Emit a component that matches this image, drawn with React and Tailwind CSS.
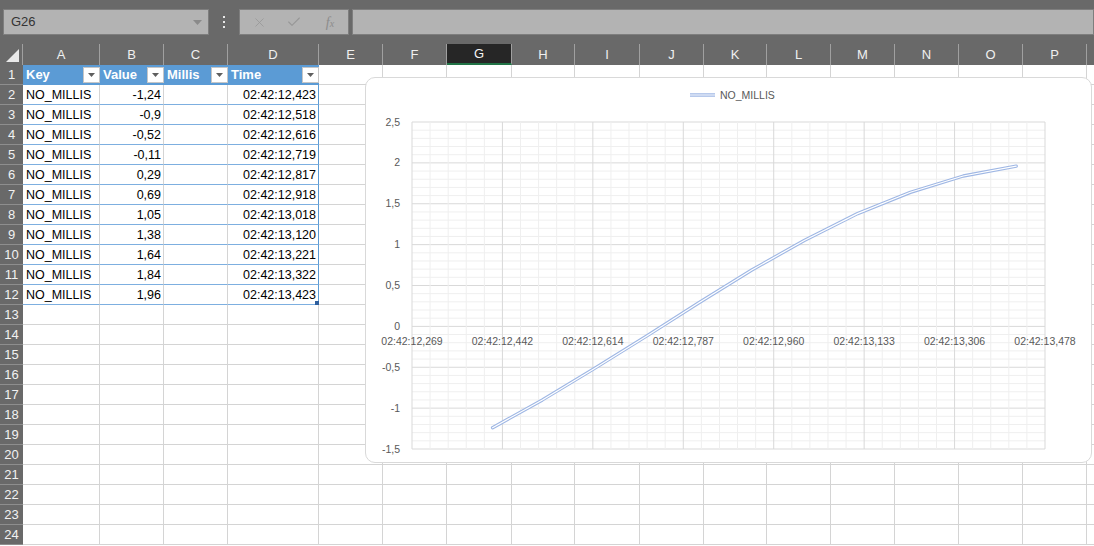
import { X, Check } from "lucide-react";

const COLS = [
  { id: "A", w: "w-[77px]" },
  { id: "B", w: "w-[64px]" },
  { id: "C", w: "w-[64px]" },
  { id: "D", w: "w-[91px]" },
  { id: "E", w: "w-[64px]" },
  { id: "F", w: "w-[64px]" },
  { id: "G", w: "w-[65px]" },
  { id: "H", w: "w-[63px]" },
  { id: "I", w: "w-[65px]" },
  { id: "J", w: "w-[64px]" },
  { id: "K", w: "w-[63px]" },
  { id: "L", w: "w-[64px]" },
  { id: "M", w: "w-[64px]" },
  { id: "N", w: "w-[64px]" },
  { id: "O", w: "w-[64px]" },
  { id: "P", w: "w-[64px]" },
  { id: "Q", w: "w-[64px]" },
];

const ROWS = [
  ["NO_MILLIS", "-1,24", "02:42:12,423"],
  ["NO_MILLIS", "-0,9", "02:42:12,518"],
  ["NO_MILLIS", "-0,52", "02:42:12,616"],
  ["NO_MILLIS", "-0,11", "02:42:12,719"],
  ["NO_MILLIS", "0,29", "02:42:12,817"],
  ["NO_MILLIS", "0,69", "02:42:12,918"],
  ["NO_MILLIS", "1,05", "02:42:13,018"],
  ["NO_MILLIS", "1,38", "02:42:13,120"],
  ["NO_MILLIS", "1,64", "02:42:13,221"],
  ["NO_MILLIS", "1,84", "02:42:13,322"],
  ["NO_MILLIS", "1,96", "02:42:13,423"],
];

const HEADERS = ["Key", "Value", "Millis", "Time"];

// chart geometry (local to the chart box)
const PL = 46;
const PR = 679;
const PT = 44;
const PB = 371;
const T0 = 12.269;
const T1 = 13.478;
const V0 = 2.5;
const V1 = -1.5;
const sx = (t) => PL + ((t - T0) / (T1 - T0)) * (PR - PL);
const sy = (v) => PT + ((V0 - v) / (V0 - V1)) * (PB - PT);

const XLABELS = [
  "02:42:12,269",
  "02:42:12,442",
  "02:42:12,614",
  "02:42:12,787",
  "02:42:12,960",
  "02:42:13,133",
  "02:42:13,306",
  "02:42:13,478",
];
const YLABELS = ["2,5", "2", "1,5", "1", "0,5", "0", "-0,5", "-1", "-1,5"];

function FilterButton() {
  return (
    <div className="w-[17px] h-[16px] bg-white border border-[#c6c6c6] flex items-center justify-center shrink-0">
      <svg width="9" height="6" viewBox="0 0 9 6">
        <path d="M1 1 L8 1 L4.5 5 Z" fill="#5f5f5f" />
      </svg>
    </div>
  );
}

function Chart() {
  const pts = ROWS.map((r) => {
    const t = parseFloat(r[2].slice(6).replace(",", "."));
    const v = parseFloat(r[1].replace(",", "."));
    return `${sx(t).toFixed(1)},${sy(v).toFixed(1)}`;
  }).join(" ");

  const minorH = [];
  for (let i = 0; i <= 40; i++) minorH.push(PT + (i * (PB - PT)) / 40);
  const minorV = [];
  for (let i = 0; i <= 35; i++) minorV.push(PL + (i * (PR - PL)) / 35);

  return (
    <div className="absolute left-[365px] top-[77px] w-[727px] h-[386px] rounded-[10px] border border-[#d9d9d9] bg-white overflow-hidden">
      <svg width="725" height="384" className="block" fontFamily="'Liberation Sans', Arial, sans-serif">
        {minorH.map((y, i) => (
          <line key={"h" + i} x1={PL} x2={PR} y1={y} y2={y} stroke={i % 5 === 0 ? "#d9d9d9" : "#efefef"} strokeWidth="1" />
        ))}
        {minorV.map((x, i) => (
          <line key={"v" + i} x1={x} x2={x} y1={PT} y2={PB} stroke={i % 5 === 0 ? "#d9d9d9" : "#efefef"} strokeWidth="1" />
        ))}
        {YLABELS.map((l, i) => (
          <text key={l} x="34" y={PT + (i * (PB - PT)) / 8 + 3.5} textAnchor="end" fontSize="10.5" fill="#595959">
            {l}
          </text>
        ))}
        {XLABELS.map((l, i) => (
          <text key={l} x={PL + (i * (PR - PL)) / 7} y="267" textAnchor="middle" fontSize="10.5" fill="#595959">
            {l}
          </text>
        ))}
        <polyline points={pts} fill="none" stroke="#9fb7e4" strokeWidth="3.4" strokeLinejoin="round" strokeLinecap="round" />
        <polyline points={pts} fill="none" stroke="#ffffff" strokeWidth="1.2" strokeLinejoin="round" strokeLinecap="round" />
        <line x1="324" x2="349" y1="17" y2="17" stroke="#9fb7e4" strokeWidth="3.4" />
        <line x1="324" x2="349" y1="17" y2="17" stroke="#ffffff" strokeWidth="1.2" />
        <text x="354" y="21" fontSize="10.5" fill="#595959">
          NO_MILLIS
        </text>
      </svg>
    </div>
  );
}

export default function App() {
  const rowNums = Array.from({ length: 24 }, (_, i) => i + 1);

  return (
    <div className="w-[1094px] h-[546px] overflow-hidden bg-white relative font-['Liberation_Sans',Arial,sans-serif]">
      {/* Formula bar */}
      <div className="h-[44px] bg-[#696969] flex items-start pt-[9px] pl-[3px]">
        <div className="w-[206px] shrink-0 h-[26px] bg-[#b3b3b3] border border-[#7e7e7e] flex items-center justify-between pl-[7px] pr-[6px]">
          <span className="text-[13px] text-[#333333]">G26</span>
          <svg width="9" height="5" viewBox="0 0 9 5">
            <path d="M0 0 L9 0 L4.5 5 Z" fill="#8a8a8a" />
          </svg>
        </div>
        <div className="w-[30px] shrink-0 h-[26px] flex flex-col items-center justify-center gap-[3px]">
          <div className="w-[2px] h-[2px] bg-[#e8e8e8]" />
          <div className="w-[2px] h-[2px] bg-[#e8e8e8]" />
          <div className="w-[2px] h-[2px] bg-[#e8e8e8]" />
        </div>
        <div className="w-[110px] shrink-0 h-[26px] bg-[#b3b3b3] border border-[#7e7e7e] flex items-center">
          <div className="w-[36px] flex justify-center pl-[2px]">
            <X size={15} strokeWidth={1.3} color="#979797" />
          </div>
          <div className="w-[36px] flex justify-center">
            <Check size={16} strokeWidth={1.6} color="#979797" />
          </div>
          <div className="w-[36px] flex justify-center">
            <span className="font-['Liberation_Serif',serif] italic text-[14px] text-[#8c8c8c]">
              f<span className="text-[10px]">x</span>
            </span>
          </div>
        </div>
        <div className="ml-[3px] flex-1 h-[26px] bg-[#b3b3b3] border border-[#7e7e7e]" />
      </div>

      {/* Column headers */}
      <div className="h-[21px] bg-[#696969] flex">
        <div className="w-[23px] shrink-0 h-full flex items-end justify-end pr-[3px] pb-[3px] border-r border-[#a0a0a0]">
          <svg width="13" height="13" viewBox="0 0 13 13">
            <path d="M13 0 L13 13 L0 13 Z" fill="#e9e9e9" />
          </svg>
        </div>
        {COLS.map((c) => (
          <div
            key={c.id}
            className={`${c.w} shrink-0 h-full flex items-center justify-center pt-[1px] text-[13px] ${
              c.id === "G" ? "bg-[#262626] border-b-2 border-b-[#217346] text-[#f5f5f5]" : "text-[#f0f0f0]"
            } border-r border-r-[#a0a0a0]`}
          >
            {c.id === "Q" ? "" : c.id}
          </div>
        ))}
      </div>

      {/* Grid rows */}
      {rowNums.map((n) => {
        const data = n >= 2 && n <= 12 ? ROWS[n - 2] : null;
        return (
          <div key={n} className="h-[20px] flex">
            <div className="w-[23px] shrink-0 h-full bg-[#696969] border-b border-[#8e8e8e] flex items-center justify-center pt-[1px] text-[13px] text-[#f2f2f2]">
              {n}
            </div>
            {COLS.map((c, ci) => {
              if (n === 1 && ci < 4) {
                return (
                  <div
                    key={c.id}
                    className={`${c.w} shrink-0 h-full bg-[#5b9bd5] border-b border-[#5b9bd5] flex items-center justify-between pl-[3px]`}
                  >
                    <span className="text-[13px] font-bold text-white pt-[1px]">{HEADERS[ci]}</span>
                    <FilterButton />
                  </div>
                );
              }
              if (data && ci < 4) {
                const text = ci === 0 ? data[0] : ci === 1 ? data[1] : ci === 3 ? data[2] : "";
                const right = ci === 1 || ci === 3;
                return (
                  <div
                    key={c.id}
                    className={`${c.w} shrink-0 h-full relative border-b border-[#7dafe0] ${
                      ci === 3 ? "border-r border-r-[#5b9bd5]" : "border-r border-r-[#d4d4d4]"
                    } flex items-center pt-[2px] ${right ? "justify-end pr-[2px]" : "pl-[3px]"} text-[12.5px] text-black`}
                  >
                    {text}
                    {n === 12 && ci === 3 && (
                      <div className="absolute right-[-1px] bottom-[-1px] w-[4px] h-[4px] bg-[#2f5f9e]" />
                    )}
                  </div>
                );
              }
              return (
                <div key={c.id} className={`${c.w} shrink-0 h-full border-r border-b border-[#d4d4d4]`} />
              );
            })}
          </div>
        );
      })}

      <Chart />
    </div>
  );
}
